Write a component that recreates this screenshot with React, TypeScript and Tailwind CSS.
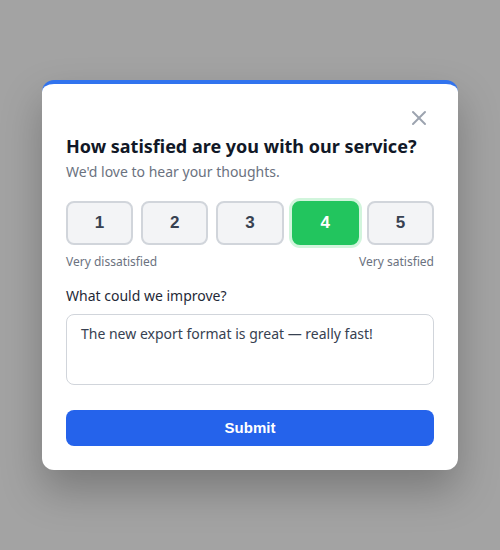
import React, { useState } from 'react';
import { X } from 'lucide-react';

const ratings = [1, 2, 3, 4, 5];

export default function App() {
  const [score, setScore] = useState(4);
  const [comment, setComment] = useState('The new export format is great — really fast!');

  return (
    <div className="flex h-[550px] w-[500px] items-center justify-center bg-[#a3a3a3] font-['Noto_Sans',sans-serif]">
      <div className="w-[416px] rounded-xl border-t-4 border-[#3173ee] bg-white px-6 pb-6 pt-6 shadow-[0_20px_40px_rgba(0,0,0,0.25)]">
        <div className="flex h-6 justify-end">
          <button className="-mt-[2px] mr-[3px] flex h-6 w-6 items-center justify-center text-[#9ca3af]">
            <X size={24} strokeWidth={2} />
          </button>
        </div>

        <h2 className="text-lg font-bold leading-7 text-[#111827]">How satisfied are you with our service?</h2>
        <p className="mt-0.5 text-sm leading-5 text-[#6b7280]">We'd love to hear your thoughts.</p>

        <div className="mt-[19px] grid grid-cols-5 gap-2">
          {ratings.map((n) => (
            <button
              key={n}
              onClick={() => setScore(n)}
              className={
                n === score
                  ? "h-11 rounded-lg border-2 border-[#22c55e] bg-[#22c55e] font-['Liberation_Sans',sans-serif] text-[17px] font-bold text-white ring-[3px] ring-[#d1f5dc]"
                  : "h-11 rounded-lg border-2 border-[#d1d5db] bg-[#f3f4f6] font-['Liberation_Sans',sans-serif] text-[17px] font-bold text-[#374151]"
              }
            >
              {n}
            </button>
          ))}
        </div>

        <div className="mt-[9px] flex justify-between text-xs leading-4 text-[#6b7280]">
          <span>Very dissatisfied</span>
          <span>Very satisfied</span>
        </div>

        <label className="mt-4 block text-sm leading-5 text-[#1f2937]">What could we improve?</label>
        <textarea
          value={comment}
          onChange={(e) => setComment(e.target.value)}
          className="mt-2 block h-[71px] w-full resize-none rounded-lg border border-[#d1d5db] px-3.5 pt-[9px] text-sm leading-5 text-[#374151] outline-none"
        />

        <button className="mt-[25px] h-9 w-full rounded-lg bg-[#2563eb] font-['Liberation_Sans',sans-serif] text-[15px] font-bold text-white">
          Submit
        </button>
      </div>
    </div>
  );
}
